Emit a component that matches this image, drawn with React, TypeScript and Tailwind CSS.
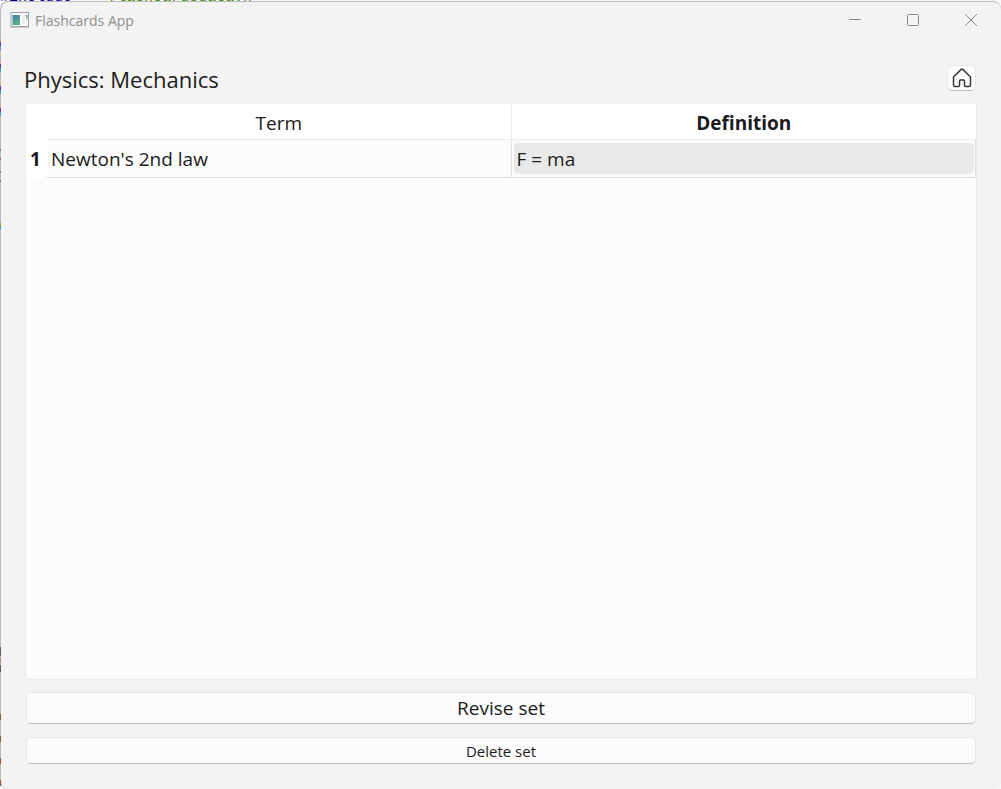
import React from "react";

const CODE_TICKS = [
  { top: 38, height: 4, color: "#d8a890" },
  { top: 42, height: 4, color: "#5a3f9a" },
  { top: 46, height: 4, color: "#5a90c8" },
  { top: 60, height: 4, color: "#d8a890" },
  { top: 64, height: 4, color: "#5a3f9a" },
  { top: 68, height: 4, color: "#5a90c8" },
  { top: 82, height: 4, color: "#d8a890" },
  { top: 86, height: 4, color: "#5a3f9a" },
  { top: 90, height: 4, color: "#5a90c8" },
  { top: 104, height: 4, color: "#d8a890" },
  { top: 108, height: 4, color: "#5a3f9a" },
  { top: 112, height: 4, color: "#5a90c8" },
  { top: 149, height: 2, color: "#a05aa8" },
  { top: 158, height: 2, color: "#a05aa8" },
  { top: 171, height: 2, color: "#a05aa8" },
  { top: 180, height: 2, color: "#a05aa8" },
  { top: 223, height: 3, color: "#a0a030" },
  { top: 226, height: 3, color: "#3f9aa0" },
  { top: 647, height: 9, color: "#5c5c5c" },
  { top: 658, height: 5, color: "#b08a78" },
  { top: 665, height: 7, color: "#5c5c5c" },
  { top: 714, height: 6, color: "#8a5a3a" },
  { top: 736, height: 6, color: "#8a5a3a" },
  { top: 758, height: 6, color: "#8a5a3a" },
  { top: 780, height: 6, color: "#8a5a3a" },
];

function AppIcon() {
  return (
    <svg width="20" height="16" viewBox="0 0 20 16" aria-hidden="true">
      <defs>
        <linearGradient id="pane" x1="0" y1="0" x2="0.6" y2="1">
          <stop offset="0" stopColor="#4878a0" />
          <stop offset="1" stopColor="#55b488" />
        </linearGradient>
      </defs>
      <rect x="1" y="0.500" width="17.500" height="14" fill="#fafafa" stroke="#9aa0ac" />
      <path d="M0.500 15.500h18.500" stroke="#c9ccd0" />
      <rect x="2.500" y="3" width="7.500" height="10" fill="url(#pane)" />
      <rect x="12" y="3" width="3" height="9" fill="#eceef2" />
      <path d="M15.500 3h2v6z" fill="#58a88c" />
    </svg>
  );
}

function CaptionButton({ label, children }: { label: string; children: React.ReactNode }) {
  return (
    <button type="button" aria-label={label} className="flex h-9 w-[58px] items-center justify-center">
      <svg width="14" height="14" viewBox="0 0 14 14" fill="none" stroke="#868686" strokeWidth="1" aria-hidden="true">
        {children}
      </svg>
    </button>
  );
}

function TitleBar() {
  return (
    <header className="flex h-9 items-center justify-between pr-px pl-[9px]">
      <div className="flex items-center gap-[5px] text-sm text-[#8f8f8f]">
        <AppIcon />
        <span className="pt-px">Flashcards App</span>
      </div>
      <div className="flex">
        <CaptionButton label="Minimize">
          <path d="M1 6.5h12" />
        </CaptionButton>
        <CaptionButton label="Maximize">
          <rect x="1.5" y="1.5" width="11" height="11" rx="1" />
        </CaptionButton>
        <CaptionButton label="Close">
          <path d="M1 1l12 12M13 1L1 13" />
        </CaptionButton>
      </div>
    </header>
  );
}

function PushButton({ className, children }: { className: string; children: React.ReactNode }) {
  return (
    <button
      type="button"
      className={`mx-px flex items-center justify-center rounded-[5px] border border-[#e6e6e6] border-b-[#bcbcbc] bg-[#fcfcfc] pt-px ${className}`}
    >
      {children}
    </button>
  );
}

export default function App() {
  return (
    <div className="relative flex min-h-screen flex-col overflow-hidden bg-[#f8f8f8] pt-px font-['Open_Sans','Noto_Sans',sans-serif] text-[#1b1b1b]">
      <div
        aria-hidden="true"
        className="absolute top-[-10px] left-0 font-['Liberation_Mono',monospace] text-[15px] leading-4 whitespace-pre text-[#00008b]"
      >
        #include   <span className="text-[#4a8a10]">"flashcardsdata.h"</span>
      </div>
      <div className="relative flex flex-1 flex-col rounded-[8px] border-t border-l border-black/25 bg-[#f3f3f3] bg-clip-padding">
        <TitleBar />
        <main className="flex flex-1 flex-col px-6 pt-[26px] pb-[25px]">
          <div className="flex h-[30px] items-center justify-between">
            <h1 className="-ml-px text-[22px] leading-[30px]">Physics: Mechanics</h1>
            <button
              type="button"
              aria-label="Home"
              className="mr-px mb-[3px] flex h-[26px] w-[29px] items-center justify-center rounded-[5px] border border-[#e6e6e6] border-b-[#bcbcbc] bg-[#fcfcfc]"
            >
              <svg width="20" height="20" viewBox="0 0 20 20" fill="none" stroke="#3a3a3a" strokeWidth="1.5" strokeLinejoin="round" aria-hidden="true">
                <path d="M1.500 9 9.200 1.400a1.200 1.200 0 0 1 1.600 0L18.500 9V17a1.500 1.500 0 0 1-1.500 1.500H13.500a1 1 0 0 1-1-1V13a1 1 0 0 0-1-1h-3a1 1 0 0 0-1 1v4.500a1 1 0 0 1-1 1H3A1.500 1.500 0 0 1 1.500 17z" />
              </svg>
            </button>
          </div>
          <div className="mt-[10px] flex-1 rounded-b-[5px] border border-t-0 border-[#ebebeb] bg-[#fcfcfc]">
            <table className="w-full table-fixed border-separate border-spacing-0 text-[19px] leading-6">
              <colgroup>
                <col className="w-[21px]" />
                <col />
                <col />
              </colgroup>
              <thead>
                <tr className="h-9 bg-white">
                  <td className="p-0" />
                  <th scope="col" className="border-r border-b border-[#ebebeb] p-0 pt-[3px] font-normal">Term</th>
                  <th scope="col" className="border-b border-[#ebebeb] p-0 pt-[3px] font-bold">Definition</th>
                </tr>
              </thead>
              <tbody>
                <tr className="h-[38px]">
                  <th scope="row" className="bg-white p-0 pr-[2px] text-center font-bold">1</th>
                  <td className="border-r border-b border-[#dedede] p-0 pl-1">Newton's 2nd law</td>
                  <td className="border-r border-b border-[#dedede] p-0 pr-px pl-[2px]">
                    <div className="flex h-[31px] items-center rounded-[4px] bg-[#e9e9e9] pl-[3px]">F = ma</div>
                  </td>
                </tr>
              </tbody>
            </table>
          </div>
          <div className="mt-3 flex flex-col gap-[13px]">
            <PushButton className="h-8 text-[19px]">Revise set</PushButton>
            <PushButton className="h-[27px] text-[15px]">Delete set</PushButton>
          </div>
        </main>
      </div>
      <div aria-hidden="true" className="absolute inset-y-0 left-0 w-px">
        {CODE_TICKS.map((tick) => (
          <span key={tick.top} className="absolute w-px" style={{ top: tick.top, height: tick.height, backgroundColor: tick.color }} />
        ))}
      </div>
    </div>
  );
}
